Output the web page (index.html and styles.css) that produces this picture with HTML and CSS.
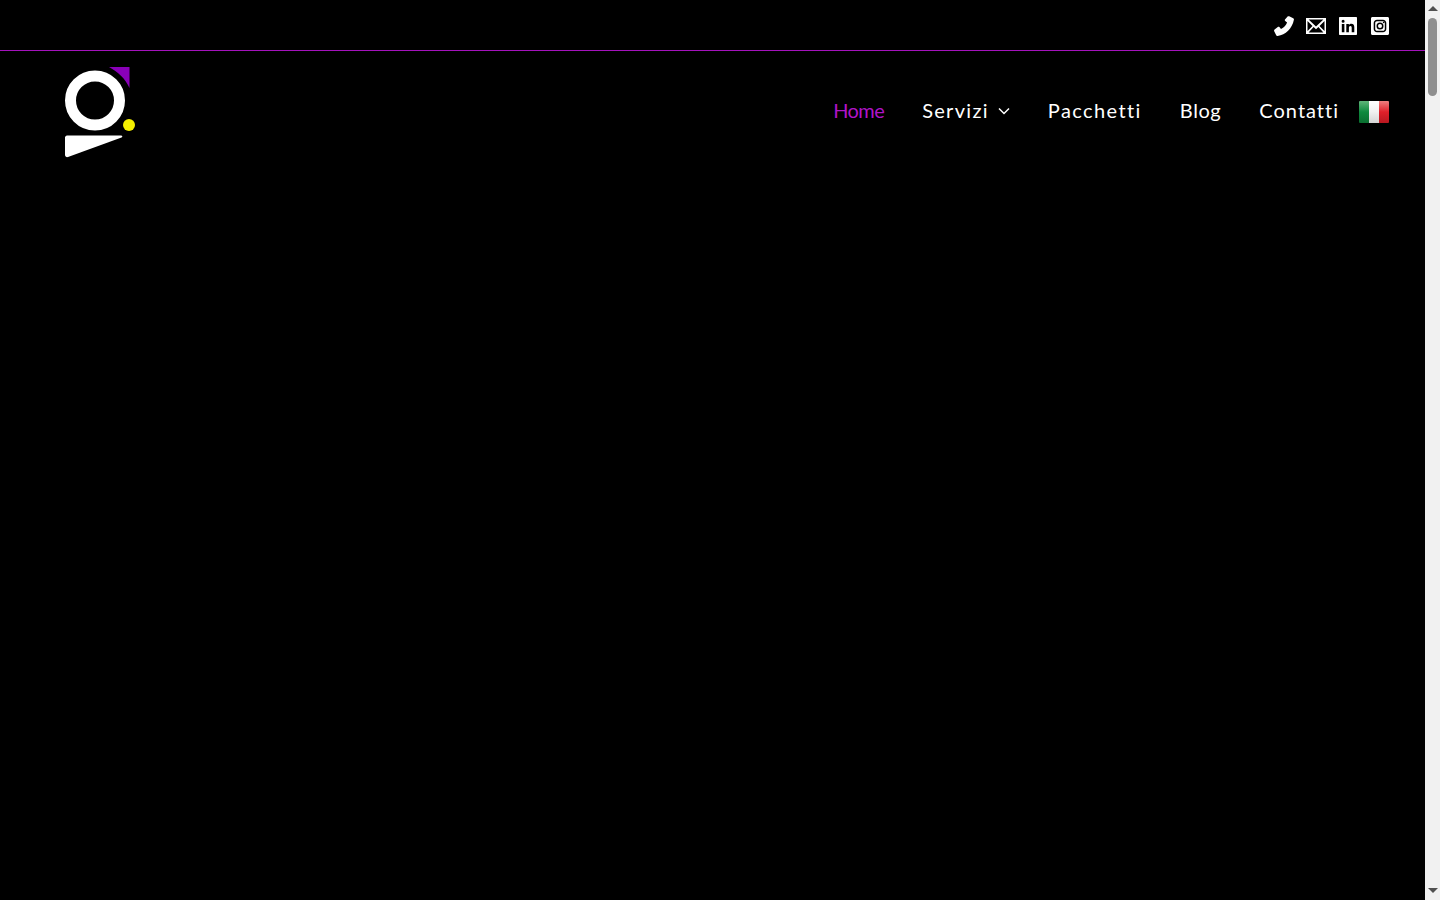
FILE: index.html
```html
<!DOCTYPE html>
<html lang="it">
<head>
    <meta charset="UTF-8">
    <meta name="viewport" content="width=device-width, initial-scale=1.0">
    <title>Home</title>
    <link rel="stylesheet" href="styles.css">
</head>
<body>
<div class="page">
    <div class="top-bar">
        <a href="#" class="top-icon" aria-label="Telefono">
            <svg viewBox="0 0 20 20" width="20" height="20"><path fill="#fff" d="M15.2 0.3 L19.2 2.2 C19.8 2.5 20.1 3.1 19.9 3.8 C18.2 12.6 11.6 19.1 3.6 20 C3 20.1 2.4 19.7 2.2 19.2 L0.2 15.2 C-0.1 14.6 0.1 13.9 0.6 13.5 L3.8 11 C4.3 10.6 5 10.7 5.4 11.1 L7 13 C10 11.6 12 9.2 13.1 6.6 L11.2 5 C10.7 4.6 10.6 3.9 11 3.4 L13.6 0.6 C14 0.1 14.7 0 15.2 0.3 Z"/></svg>
        </a>
        <a href="#" class="top-icon" aria-label="Email">
            <svg viewBox="0 0 20 16" width="20" height="16"><path fill="#fff" fill-rule="evenodd" d="M0 0 H20 V16 H0 Z M1.500 3 V13 L6.500 8 Z M2.600 1.500 L10 8.600 L17.400 1.500 Z M18.500 3 L13.500 8 L18.500 13 Z M7.600 9 L2.600 14.500 H17.400 L12.400 9 L10 11.300 Z"/></svg>
        </a>
        <a href="#" class="top-icon icon-linkedin" aria-label="LinkedIn">
            <svg viewBox="0 0 18 18" width="18" height="18"><path fill="#fff" fill-rule="evenodd" d="M1 0 H17 C17.600 0 18 0.400 18 1 V17 C18 17.600 17.600 18 17 18 H1 C0.400 18 0 17.600 0 17 V1 C0 0.400 0.400 0 1 0 Z M2.800 6.900 V15.300 H5.400 V6.900 Z M4.100 2.700 A1.500 1.500 0 1 0 4.100 5.700 A1.500 1.500 0 1 0 4.100 2.700 Z M7.300 6.900 V15.300 H9.900 V11 C9.900 9.800 10.300 9 11.400 9 C12.500 9 12.700 9.900 12.700 11 V15.300 H15.300 V10.500 C15.300 8.200 14.600 6.700 12.300 6.700 C11.100 6.700 10.300 7.300 9.900 8 V6.900 Z"/></svg>
        </a>
        <a href="#" class="top-icon icon-instagram" aria-label="Instagram">
            <svg viewBox="0 0 18 18" width="18" height="18"><path fill="#fff" fill-rule="evenodd" d="M1.500 0 H16.500 C17.400 0 18 0.600 18 1.500 V16.500 C18 17.400 17.400 18 16.500 18 H1.500 C0.600 18 0 17.400 0 16.500 V1.500 C0 0.600 0.600 0 1.500 0 Z M6 2.700 C4.200 2.700 2.700 4.200 2.700 6 V12 C2.700 13.800 4.200 15.300 6 15.300 H12 C13.800 15.300 15.300 13.800 15.300 12 V6 C15.300 4.200 13.800 2.700 12 2.700 Z M6 4.200 H12 C13 4.200 13.800 5 13.800 6 V12 C13.800 13 13 13.800 12 13.800 H6 C5 13.800 4.200 13 4.200 12 V6 C4.200 5 5 4.200 6 4.200 Z M9 5.500 A3.500 3.500 0 1 0 9 12.500 A3.500 3.500 0 1 0 9 5.500 Z M9 7 A2 2 0 1 1 9 11 A2 2 0 1 1 9 7 Z M12.600 4.700 A0.800 0.800 0 1 0 12.600 6.300 A0.800 0.800 0 1 0 12.600 4.700 Z"/></svg>
        </a>
    </div>

    <header class="main-header">
        <a href="#" class="logo" aria-label="Logo">
            <svg viewBox="0 0 70 91" width="70" height="91">
                <path fill="#8a00b8" d="M44 0 H64.500 V21 C60 11 53 5 44 0 Z"/>
                <circle cx="30" cy="33.500" r="24.500" fill="none" stroke="#fff" stroke-width="11"/>
                <circle cx="64" cy="58" r="6" fill="#f5f000"/>
                <path fill="#fff" d="M2 68.500 H56 C57.500 68.500 57.800 70 56.500 70.500 L3 90 C1.500 90.500 0 89.500 0 88 V70.500 C0 69.500 1 68.500 2 68.500 Z"/>
            </svg>
        </a>
        <nav class="main-nav">
            <a href="#" class="nav-link nav-home active">Home</a>
            <a href="#" class="nav-link nav-servizi">Servizi
                <svg class="caret" viewBox="0 0 12 8" width="12" height="8"><path fill="none" stroke="#fff" stroke-width="1.500" d="M1 1.500 L6 6.500 L11 1.500"/></svg>
            </a>
            <a href="#" class="nav-link nav-pacchetti">Pacchetti</a>
            <a href="#" class="nav-link nav-blog">Blog</a>
            <a href="#" class="nav-link nav-contatti">Contatti</a>
            <span class="flag" aria-label="Italiano"><i class="green"></i><i class="white"></i><i class="red"></i></span>
        </nav>
    </header>
</div>

<div class="scrollbar">
    <span class="arrow-up"></span>
    <div class="scroll-track"><div class="scroll-thumb"></div></div>
    <span class="arrow-down"></span>
</div>
</body>
</html>
```

FILE: styles.css
```css
/* Global Styles */
body {
    font-family: 'Lato', sans-serif;
    margin: 0;
    padding: 0;
    height: 100vh;
    overflow: hidden;
    display: flex;
    background-color: #000;
}

.page {
    flex: 1;
    min-width: 0;
}

/* Top Bar */
.top-bar {
    height: 51px;
    border-bottom: 1px solid #a412bc;
    display: flex;
    justify-content: flex-end;
    align-items: center;
    gap: 12px;
    padding: 1px 36px 0 0;
    box-sizing: border-box;
}

.top-icon {
    display: flex;
    align-items: center;
}

.icon-linkedin {
    margin-left: 1px;
}

.icon-instagram {
    margin-left: 2px;
}

/* Header */
.main-header {
    display: flex;
    justify-content: space-between;
    align-items: flex-start;
    padding: 16px 36px 0 65px;
}

.logo {
    display: block;
    height: 91px;
}

.logo svg {
    display: block;
}

.main-nav {
    display: flex;
    align-items: center;
    gap: 38px;
    margin-top: 30px;
    height: 30px;
}

.nav-link {
    color: #fff;
    text-decoration: none;
    font-size: 20px;
    letter-spacing: 1px;
    line-height: 24px;
    padding-bottom: 4px;
    display: flex;
    align-items: center;
    gap: 9px;
}

.nav-link.active {
    color: #b014c8;
}

.nav-home {
    letter-spacing: -0.6px;
}

.nav-servizi {
    letter-spacing: 1.3px;
}

.nav-pacchetti {
    letter-spacing: 1.4px;
}

.nav-blog {
    letter-spacing: 0.6px;
}

.nav-contatti {
    letter-spacing: 1px;
}

.caret {
    margin-top: 2px;
}

/* Language Flag */
.flag {
    display: flex;
    width: 30px;
    height: 22px;
    margin-left: -18px;
    border-radius: 1px;
    overflow: hidden;
}

.flag i {
    flex: 1;
}

.flag .green {
    background: linear-gradient(#5fb57a, #0e8a3e 50%, #0a6e30);
}

.flag .white {
    background: linear-gradient(#fff, #f0f0f0 50%, #d4d4d4);
}

.flag .red {
    background: linear-gradient(#f08080, #e0202a 50%, #b81820);
}

/* Scrollbar */
.scrollbar {
    width: 15px;
    flex: none;
    height: 100%;
    background-color: #f1f1f1;
    display: flex;
    flex-direction: column;
    align-items: center;
}

.scroll-track {
    flex: 1;
    width: 100%;
    padding-top: 3px;
}

.scroll-thumb {
    width: 9px;
    height: 78px;
    margin: 0 auto;
    border-radius: 5px;
    background-color: #8f8f8f;
}

.arrow-up, .arrow-down {
    width: 0;
    height: 0;
    border-left: 5px solid transparent;
    border-right: 5px solid transparent;
}

.arrow-up {
    margin: 6px 0 4px;
    border-bottom: 5px solid #505050;
}

.arrow-down {
    margin: 4px 0 7px;
    border-top: 5px solid #505050;
}
```
